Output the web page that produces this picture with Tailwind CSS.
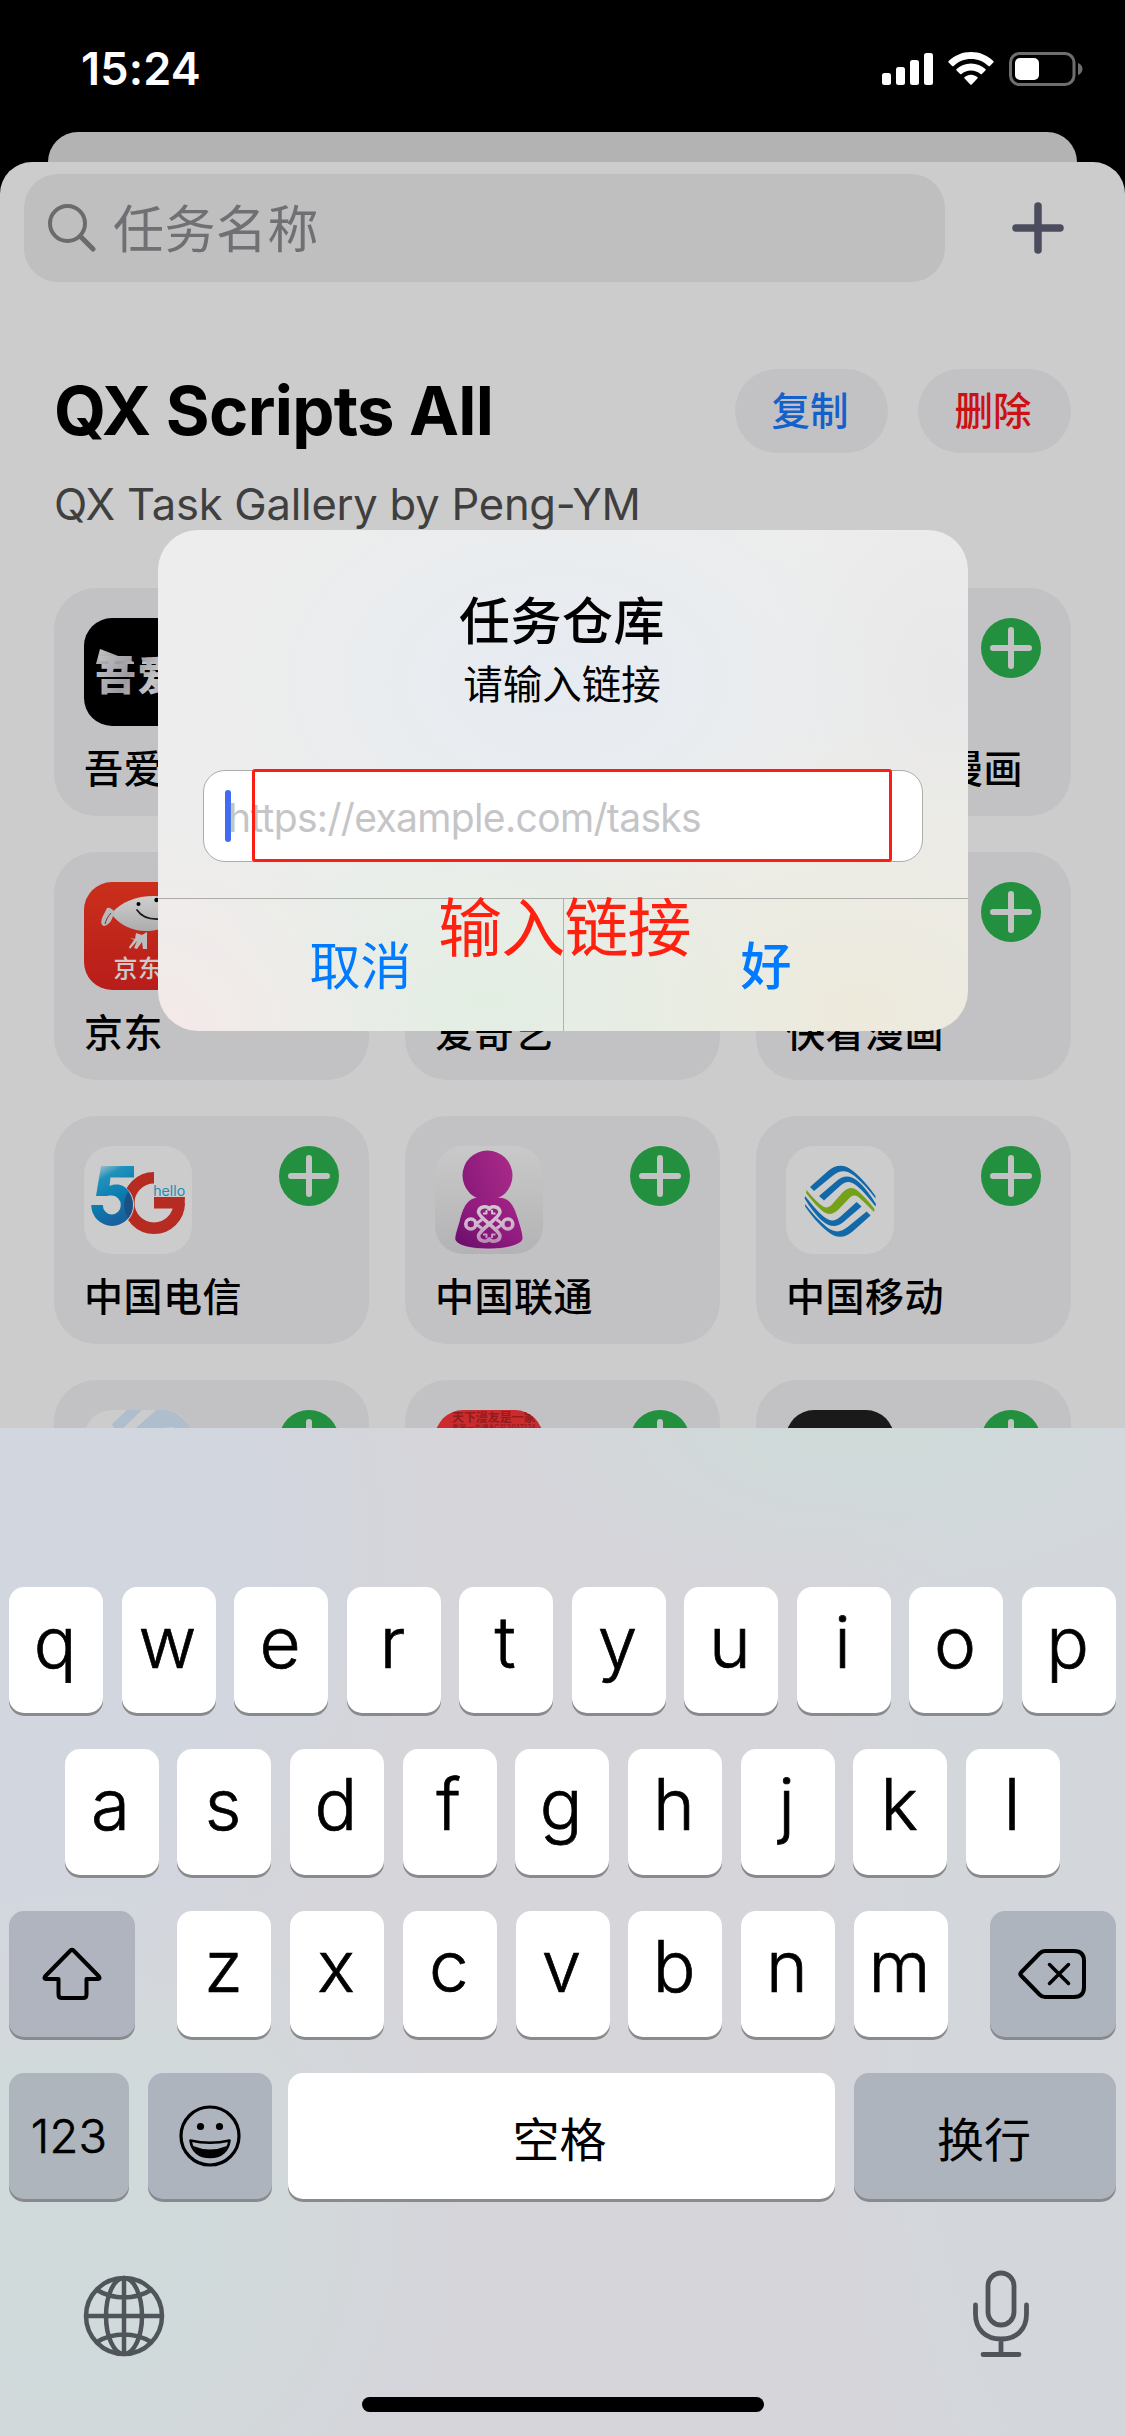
<!DOCTYPE html>
<html lang="zh-CN">
<head>
<meta charset="utf-8">
<title>任务仓库</title>
<script src="https://cdn.jsdelivr.net/npm/@tailwindcss/browser@4"></script>
</head>
<body class="bg-black">
<svg class="hidden">
  <symbol id="add" viewBox="0 0 60 60"><circle cx="30" cy="30" r="30" fill="#22903e"/><path d="M30 12V48M12 30H48" stroke="#c2c2c4" stroke-width="6" stroke-linecap="round"/></symbol>
</svg>
<div class="relative flex h-[2436px] w-[1125px] flex-col overflow-hidden bg-black font-['Inter','Noto_Sans_CJK_SC',sans-serif] text-black">

  <!-- status bar -->
  <header class="flex h-[132px] shrink-0 items-start justify-between pt-[52px] pr-[42px] pl-[81px]">
    <div class="-mt-[5px] text-[45px] leading-[44px] font-semibold tracking-[0.2px] text-white">15:24</div>
    <div class="flex items-start">
      <svg width="52" height="34" viewBox="0 0 52 34" fill="#fff"><rect x="0" y="21" width="9" height="12" rx="2.5"/><rect x="14" y="15" width="9" height="18" rx="2.5"/><rect x="28" y="8" width="9" height="25" rx="2.5"/><rect x="42" y="1" width="9" height="32" rx="2.5"/></svg>
      <svg class="ml-[14px]" width="46" height="34" viewBox="0 0 46 34" fill="#fff"><path d="M23 0C31.8 0 39.5 3.4 45.3 9a1 1 0 0 1 0 1.5l-3.4 3.4a1 1 0 0 1-1.5 0C35.8 9.700 29.700 7 23 7S10.200 9.700 5.600 13.900a1 1 0 0 1-1.500 0L.700 10.500a1 1 0 0 1 0-1.500C6.500 3.400 14.200 0 23 0Z"/><path d="M23 11.500c5.600 0 10.600 2.100 14.400 5.600a1 1 0 0 1 0 1.500l-3.500 3.400a1 1 0 0 1-1.400 0c-2.500-2.200-5.800-3.500-9.500-3.500s-7 1.300-9.500 3.500a1 1 0 0 1-1.400 0l-3.500-3.400a1 1 0 0 1 0-1.500c3.800-3.500 8.800-5.600 14.400-5.600Z"/><path d="M23 22.700c2.500 0 4.700.9 6.400 2.400a1 1 0 0 1 0 1.500L23.700 32.500a1 1 0 0 1-1.400 0L16.600 26.600a1 1 0 0 1 0-1.500c1.700-1.500 3.900-2.400 6.400-2.400Z"/></svg>
      <svg class="ml-[15px]" width="74" height="34" viewBox="0 0 74 34"><rect x="1.500" y="1.500" width="63.500" height="31" rx="9" fill="none" stroke="#6e6e6e" stroke-width="3"/><rect x="6" y="6" width="24" height="22" rx="5" fill="#fff"/><path d="M69 11c3 1 4.500 3.500 4.500 6s-1.500 5-4.500 6Z" fill="#6e6e6e"/></svg>
    </div>
  </header>

  <div class="mx-12 h-[30px] shrink-0 rounded-t-[30px] bg-[#b3b3b3]"></div>

  <main class="flex h-[2274px] shrink-0 flex-col rounded-t-[32px] bg-[#ccc]">
    <!-- search -->
    <div class="flex items-center pt-3 pl-6">
      <div class="flex h-[108px] w-[921px] items-center rounded-[34px] bg-[#bfbfbf] pl-6">
        <svg width="48" height="48" viewBox="0 0 48 48" fill="none" stroke="#6b6b6d" stroke-linecap="round"><circle cx="19.500" cy="19.500" r="17.500" stroke-width="4"/><path d="M32.500 32.500 45 45" stroke-width="5"/></svg>
        <span class="mt-[3px] ml-[17px] text-[51px] leading-[60px] tracking-[0.5px] text-[#707074]">任务名称</span>
      </div>
      <svg class="ml-[67px]" width="52" height="52" viewBox="0 0 52 52" stroke="#4b4c5e" stroke-width="7.500" stroke-linecap="round"><path d="M26 4V48M4 26H48"/></svg>
    </div>

    <!-- gallery heading -->
    <div class="mt-[87px] flex h-[84px] items-center justify-between pr-[54px] pl-[54px]">
      <h1 class="text-[67px] leading-[84px] font-bold tracking-[-0.700px] whitespace-nowrap">QX Scripts All</h1>
      <div class="flex gap-[30px] *:h-[84px] *:w-[153px] *:rounded-full *:bg-[#c2c2c4] *:pr-[3px] *:text-center *:text-[38.500px] *:leading-[84px] *:font-medium">
        <button class="text-[#1461cc]">复制</button>
        <button class="text-[#cc1114]">删除</button>
      </div>
    </div>
    <p class="mt-[24px] pl-[54px] text-[43.500px] leading-[54px] tracking-[-0.220px] whitespace-nowrap text-[#3f3f3f]">QX Task Gallery by Peng-YM</p>

    <!-- tasks -->
    <div class="mt-[57px] grid grid-cols-3 gap-9 px-[54px] *:h-[228px] *:rounded-[42px] *:bg-[#c2c2c4] *:px-[30px] *:pt-[30px] *:text-[39px] *:leading-[48px] *:font-medium *:tracking-[0.500px] *:whitespace-nowrap">
      <section>
        <div class="flex items-start justify-between">
          <svg class="rounded-[28px]" width="108" height="108" viewBox="0 0 108 108"><defs><linearGradient id="metal" x2="1" y2=".3"><stop stop-color="#c8c8ca"/><stop offset=".5" stop-color="#9a9aa0"/><stop offset=".8" stop-color="#c4c4c8"/><stop offset="1" stop-color="#b0b0b4"/></linearGradient></defs><rect width="108" height="108"/><path d="M16 31 50 44V46H12Z M58 44 74 40 92 34 96 46H58Z" fill="url(#metal)"/><text x="11" y="72" font-size="41" font-weight="900" textLength="84" fill="url(#metal)">吾爱</text></svg>
          <svg width="60" height="60"><use href="#add"/></svg>
        </div>
        <div class="mt-[19px]">吾爱破解</div>
      </section>
      <section></section>
      <section>
        <div class="flex items-start justify-end"><svg width="60" height="60"><use href="#add"/></svg></div>
        <div class="mt-[67px]">哔哩哔哩漫画</div>
      </section>

      <section>
        <div class="flex items-start justify-between">
          <svg class="rounded-[28px]" width="108" height="108" viewBox="0 0 108 108"><defs><linearGradient id="jd" x2="0" y2="1"><stop stop-color="#ca2f1c"/><stop offset="1" stop-color="#b81d1a"/></linearGradient><linearGradient id="dog" x2="0" y2="1"><stop stop-color="#cfcfcf"/><stop offset="1" stop-color="#acacac"/></linearGradient></defs><rect width="108" height="108" fill="url(#jd)"/><path d="M52 51 58 53 63 50V67H59L58 60 53 67 50 66 53 59 46 67 45 65 50 58 46 56 51 57Z" fill="#bdbdbd"/><path d="M28 31C37 20 52 14 70 14 84 14 92 22 92 31 92 42 78 49 62 49 48 49 36 43 28 33Z" fill="url(#dog)"/><path d="M23 26C25 25 28 27 30 29L29 34C28 38 25 43 20 44 16 43 17 38 19 34Z" fill="#b8b8b8"/><path d="M27 31C24 34 22 38 21 42" stroke="#8e2a22" stroke-width="1" fill="none"/><path d="M53 28C57 34 65 37.500 75 37" fill="none" stroke="#1a1a1a" stroke-width="1.700" stroke-linecap="round"/><circle cx="54.500" cy="22" r="2"/><circle cx="72.500" cy="18" r="2.200"/><text x="29.500" y="95" font-size="24" font-weight="500" fill="#cbcbcb">京东</text></svg>
          <svg width="60" height="60"><use href="#add"/></svg>
        </div>
        <div class="mt-[19px]">京东</div>
      </section>
      <section>
        <div class="h-[108px]"></div>
        <div class="mt-[19px]">爱奇艺</div>
      </section>
      <section>
        <div class="flex h-[108px] items-start justify-end"><svg width="60" height="60"><use href="#add"/></svg></div>
        <div class="mt-[19px]">快看漫画</div>
      </section>

      <section>
        <div class="flex items-start justify-between">
          <svg class="rounded-[28px] bg-[#ccc]" width="108" height="108" viewBox="0 0 108 108"><defs><linearGradient id="five" x1=".1" y1="0" x2=".5" y2="1"><stop stop-color="#b5c6cd"/><stop offset=".24" stop-color="#1f92bb"/><stop offset=".6" stop-color="#0a7cb0"/><stop offset="1" stop-color="#1a5f9e"/></linearGradient></defs>
            <path d="M70 31.800A25.200 25.200 0 1 0 95.200 57" fill="none" stroke="#b62b22" stroke-width="11.500"/><path d="M70 51H101L100.500 60 90 62.500H70Z" fill="#b62b22"/>
            <circle cx="28" cy="59" r="21.500" fill="none" stroke="#ccc" stroke-width="1.200"/>
            <path d="M17 20H50V31.500H26.500L25.500 40C40 34 49 47 49 59A20.800 20.800 0 0 1 7.200 59H18.800A9 9.500 0 1 0 28 49.500C25 49.500 23 50 22 50H12Z" fill="url(#five)"/>
            <path d="M44 46C50 53 50 65 44 72 39 64 39 54 44 46Z" fill="#1c5083"/>
            <text class="tracking-normal" x="69.200" y="50" font-size="13.800" textLength="32" lengthAdjust="spacingAndGlyphs" font-weight="400" fill="#1f8cb2">hello</text></svg>
          <svg width="60" height="60"><use href="#add"/></svg>
        </div>
        <div class="mt-[19px]">中国电信</div>
      </section>
      <section>
        <div class="flex items-start justify-between">
          <svg class="rounded-[28px]" width="108" height="108" viewBox="0 0 108 108"><defs><linearGradient id="ubg" x2="0" y2="1"><stop stop-color="#c9c9c9"/><stop offset="1" stop-color="#b3b3b5"/></linearGradient><linearGradient id="body" x1="0" y1="1" x2="1" y2="0"><stop stop-color="#640d68"/><stop offset=".5" stop-color="#8f1b7e"/><stop offset="1" stop-color="#a82387"/></linearGradient><linearGradient id="head" x1="0" y1=".6" x2="1" y2=".3"><stop stop-color="#8b1a7b"/><stop offset="1" stop-color="#a82a88"/></linearGradient><linearGradient id="knot" gradientUnits="userSpaceOnUse" x1="54" y1="59" x2="54" y2="97"><stop stop-color="#cfc8cf"/><stop offset=".5" stop-color="#cfb9cc"/><stop offset="1" stop-color="#bb86b4"/></linearGradient></defs><rect width="108" height="108" fill="url(#ubg)"/><path d="M40 51.500C31 54 27 63 24 76 21 86 19.500 90 20 94 23 100 36 103 54 103 72 103 86 99 88 93 88 87 85 78 82 69 79 60 75 53 67 51.500Z" fill="url(#body)" stroke="#c7bcc6" stroke-width=".8"/><circle cx="52.500" cy="29.500" r="25" fill="url(#head)"/>
          <g fill="none" stroke="url(#knot)" stroke-width="3.600" stroke-linejoin="round"><circle cx="35.800" cy="78" r="5"/><circle cx="72.800" cy="78" r="5"/><path d="M54.300 63C52 59.500 44 60 43.500 66 43.500 72 65 84 65 90 64.500 96 56.500 96.500 54.300 93 52 96.500 44 96 43.500 90 43.500 84 65 72 65 66 64.500 60 56.500 59.500 54.300 63Z"/><path d="M41 78 47 73.500M41 78 47 82.500M67.500 78 61.500 73.500M67.500 78 61.500 82.500" stroke-width="3"/><path d="M48 67.500H51.500V64M60.500 67.500H57V64M48 88.500H51.500V92M60.500 88.500H57V92" stroke-width="2"/></g></svg>
          <svg width="60" height="60"><use href="#add"/></svg>
        </div>
        <div class="mt-[19px]">中国联通</div>
      </section>
      <section>
        <div class="flex items-start justify-between">
          <svg class="rounded-[28px] bg-[#ccc]" width="108" height="108" viewBox="0 0 108 108"><g id="half" fill="#1169aa"><path d="M24 41 42 25C50 18 59 18 67 25 76 32 84 42 89.500 50V52.500C83 44 76 36 68 29.500 60 23.500 54 24 47 29.500L28 45Z"/><path d="M33 50 50 35.500C57 29 64 29 71 34.500 79 41 85 50 90 58L89.500 60.500C83 52 77 45 71 40 64 34.500 60 35 54 40L38 54.500Z"/></g><use href="#half" transform="rotate(180 54.300 55.300)"/><path d="M20.500 44C26 51 32 57 37 60.500 41 62.500 43 61 46 58.500L56 47C62 41 67 40.500 72 45 79 51 85 58 88.500 63L88 66C82 60 77 55 73 51.500 68 48 66 50 63 52.500L52 64C46 69 42 69 37 65.500 30 60 24 52 20 47Z" fill="#75a01a"/></svg>
          <svg width="60" height="60"><use href="#add"/></svg>
        </div>
        <div class="mt-[19px]">中国移动</div>
      </section>

      <section>
        <div class="flex items-start justify-between">
          <svg class="rounded-[28px] bg-[#ccc]" width="108" height="108" viewBox="0 0 108 108"><path d="M28 14 43 0H58L32 25ZM52 18 72 0H84C92 2 100 8 106 17V30H98C98 18 88 14 78 19L66 30H40Z" fill="#afbecc"/></svg>
          <svg width="60" height="60"><use href="#add"/></svg>
        </div>
      </section>
      <section>
        <div class="flex items-start justify-between">
          <svg class="rounded-[28px]" width="108" height="108" viewBox="0 0 108 108"><rect width="108" height="108" fill="#cb2b2d"/><g fill="#8f1c1e"><text x="17" y="12" font-size="12" font-weight="700" textLength="84">天下漫友是一家</text><text x="17" y="20" font-size="7" textLength="84">看第一个漫AC号2017174</text></g></svg>
          <svg width="60" height="60"><use href="#add"/></svg>
        </div>
      </section>
      <section>
        <div class="flex items-start justify-between">
          <div class="size-[108px] rounded-[28px] bg-[#1a1a1a]"></div>
          <svg width="60" height="60"><use href="#add"/></svg>
        </div>
      </section>
    </div>
  </main>

  <!-- dialog -->
  <div class="absolute top-[530px] left-[158px] flex h-[501px] w-[810px] flex-col overflow-hidden rounded-[40px] bg-[#ecedec] bg-[radial-gradient(ellipse_320px_220px_at_400px_150px,#e6ebf2,transparent),radial-gradient(ellipse_260px_200px_at_0px_500px,#f3e9e8,transparent),radial-gradient(ellipse_320px_200px_at_330px_470px,#e3eee3,transparent),radial-gradient(ellipse_420px_280px_at_700px_480px,#edeadc,transparent),radial-gradient(ellipse_200px_260px_at_790px_150px,#e9e8e9,transparent)]">
    <h2 class="mt-[61px] pr-[2px] text-center text-[51px] leading-[62px] font-medium tracking-[0.500px]">任务仓库</h2>
    <p class="mt-[7px] pr-[2px] text-center text-[39.500px] leading-[50px]">请输入链接</p>
    <div class="mx-auto mt-[60px] flex h-[92px] w-[720px] items-center rounded-[22px] border border-[#acacac] bg-white pl-[21px]">
      <span class="h-[52px] w-[6px] rounded-full bg-[#416bf5]"></span>
      <span class="mt-[4px] -ml-[3px] text-[39px] leading-[48px] tracking-[-0.650px] whitespace-nowrap text-[#c5c5c7]">https://example.com/tasks</span>
    </div>
    <div class="mt-[36px] grid h-[133px] grid-cols-[406px_404px] border-t border-[#abaea8] text-center text-[51px] leading-[135px] text-[#007aff]">
      <button class="border-r border-[#abb5ab]">取消</button>
      <button class="font-medium">好</button>
    </div>
  </div>

  <!-- annotation drawn over the dialog -->
  <div class="absolute top-[769px] left-[252px] h-[93px] w-[640px] rounded-[3px] border-3 border-[#fe1d12]"></div>
  <div class="absolute top-[892px] left-[438px] text-[64px] leading-[72px] tracking-[-0.800px] whitespace-nowrap text-[#ff2010]">输入链接</div>

  <!-- keyboard -->
  <div class="absolute top-[1428px] left-0 flex h-[1008px] w-[1125px] flex-col bg-[#d5d5da] bg-[radial-gradient(ellipse_420px_520px_at_0px_120px,#d2d6df_60%,transparent),radial-gradient(ellipse_400px_400px_at_60px_800px,#d0dadb_30%,transparent),radial-gradient(ellipse_340px_160px_at_860px_0px,#d0dad9_20%,transparent),radial-gradient(ellipse_300px_900px_at_1125px_450px,#d3d7dc_70%,transparent)] pt-[159px] *:shrink-0">
    <div class="flex gap-[18.500px] pl-[9px] *:h-[126px] *:w-[94px] *:rounded-[15px] *:bg-white *:pr-[2px] *:text-center *:text-[71px] *:leading-[110px] *:font-light *:shadow-[0_3px_0_#898a8d] *:[-webkit-text-stroke:0.7px_#000]">
      <div>q</div><div>w</div><div>e</div><div>r</div><div>t</div><div>y</div><div>u</div><div>i</div><div>o</div><div>p</div>
    </div>
    <div class="mt-9 flex gap-[18.700px] pl-[64.500px] *:h-[126px] *:w-[94px] *:rounded-[15px] *:bg-white *:pr-[2px] *:text-center *:text-[71px] *:leading-[110px] *:font-light *:shadow-[0_3px_0_#898a8d] *:[-webkit-text-stroke:0.7px_#000]">
      <div>a</div><div>s</div><div>d</div><div>f</div><div>g</div><div>h</div><div>j</div><div>k</div><div>l</div>
    </div>
    <div class="mt-9 flex justify-between px-[9px]">
      <div class="flex h-[126px] w-[126px] items-center justify-center rounded-[15px] bg-[#b0b4be] shadow-[0_3px_0_#898a8d]">
        <svg width="60" height="54" viewBox="0 0 60 54" fill="none" stroke="#000" stroke-width="4" stroke-linejoin="round"><path d="M28.500 3.500Q30 2 31.500 3.500L57 29.500Q58.500 32 56 32H44.500V47.500Q44.500 51 41 51H20Q16.500 51 16.500 47.500V32H4Q1.500 32 3 29.500Z"/></svg>
      </div>
      <div class="flex gap-[18.700px] *:h-[126px] *:w-[94px] *:rounded-[15px] *:bg-white *:pr-[2px] *:text-center *:text-[71px] *:leading-[110px] *:font-light *:shadow-[0_3px_0_#898a8d] *:[-webkit-text-stroke:0.7px_#000]">
        <div>z</div><div>x</div><div>c</div><div>v</div><div>b</div><div>n</div><div>m</div>
      </div>
      <div class="flex h-[126px] w-[126px] items-center justify-center rounded-[15px] bg-[#adb4bd] pr-[2px] shadow-[0_3px_0_#898a8d]">
        <svg width="68" height="50" viewBox="0 0 68 50" fill="none" stroke="#000" stroke-width="4" stroke-linejoin="round" stroke-linecap="round"><path d="M21.500 4.500Q24 2 27 2H56Q66 2 66 12V38Q66 48 56 48H27Q24 48 21.500 45.500L3 26.500Q1.500 25 3 23.500Z"/><path d="M31.500 15.500 50.500 34.500M50.500 15.500 31.500 34.500" stroke-width="3.500"/></svg>
      </div>
    </div>
    <div class="mt-9 flex pl-[9px] *:flex *:h-[126px] *:items-center *:justify-center *:rounded-[15px] *:shadow-[0_3px_0_#898a8d]">
      <div class="w-[120px] bg-[#aeb5bd] text-[47px] font-light tracking-[0.300px] [-webkit-text-stroke:0.6px_#000]">123</div>
      <div class="ml-[19px] w-[124px] bg-[#adb4bd]">
        <svg width="62" height="62" viewBox="0 0 62 62" fill="none" stroke="#000" stroke-width="3.200"><circle cx="31" cy="31" r="29"/><circle cx="21.500" cy="21.500" r="3.600" fill="#000" stroke="none"/><circle cx="40.500" cy="21.500" r="3.600" fill="#000" stroke="none"/><path d="M11.500 35.500Q31 40 50.500 35.500C49 46 42 52 31 52S13 46 11.500 35.500Z" stroke-width="2.600" stroke-linejoin="round"/><path d="M14 41Q31 48 48 41C45 48 39 52 31 52S17 48 14 41Z" fill="#000" stroke="none"/></svg>
      </div>
      <div class="ml-4 w-[547px] bg-white pt-[9px] pr-[4px] text-[47px]">空格</div>
      <div class="ml-[19px] w-[262px] bg-[#adb4be] pt-[9px] pr-[2px] text-[47px]">换行</div>
    </div>
    <div class="mt-[71px] flex items-start justify-between pr-[95px] pl-[83px]">
      <svg class="mt-[5px]" width="82" height="82" viewBox="0 0 82 82" fill="none" stroke="#50555b" stroke-width="4.500"><circle cx="41" cy="41" r="38"/><ellipse cx="41" cy="41" rx="18" ry="38"/><path d="M41 3V79M3 41H79M14 15Q26 22.500 41 22.500T68 15M14 67Q26 59.500 41 59.500T68 67"/></svg>
      <svg width="58" height="88" viewBox="0 0 58 88" fill="none" stroke="#50555b" stroke-width="4.800" stroke-linecap="round"><rect x="16" y="3" width="26" height="52" rx="13"/><path d="M3.500 35V44C3.500 60 14 69 29 69S54.500 60 54.500 44V35M29 69V84M11 84.500H47"/></svg>
    </div>
    <div class="mx-auto mt-[39px] h-[15px] w-[402px] rounded-full bg-black"></div>
  </div>
</div>
</body>
</html>
